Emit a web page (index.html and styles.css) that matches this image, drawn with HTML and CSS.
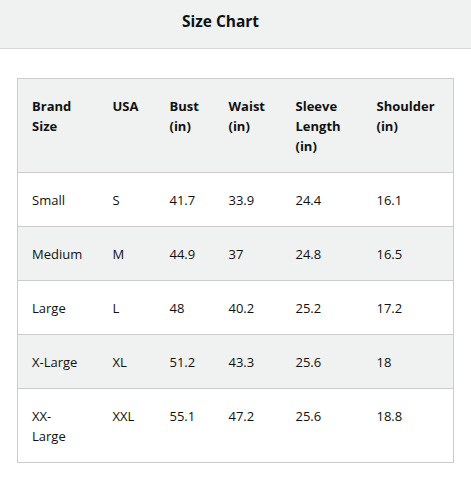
FILE: index.html
```html
<!DOCTYPE html>
<html>
<head>
<meta charset="utf-8">
<link rel="stylesheet" href="styles.css">
</head>
<body>
<header class="bar"><h1 class="title">Size Chart</h1></header>
<main class="content">
<table class="chart">
<colgroup>
<col class="c1"><col class="c2"><col class="c3"><col class="c4"><col class="c5"><col class="c6">
</colgroup>
<thead>
<tr class="shade"><th>Brand Size</th><th>USA</th><th>Bust (in)</th><th>Waist (in)</th><th>Sleeve Length (in)</th><th>Shoulder (in)</th></tr>
</thead>
<tbody>
<tr><td>Small</td><td>S</td><td>41.7</td><td>33.9</td><td>24.4</td><td>16.1</td></tr>
<tr class="shade"><td>Medium</td><td>M</td><td>44.9</td><td>37</td><td>24.8</td><td>16.5</td></tr>
<tr><td>Large</td><td>L</td><td>48</td><td>40.2</td><td>25.2</td><td>17.2</td></tr>
<tr class="shade"><td>X-Large</td><td>XL</td><td>51.2</td><td>43.3</td><td>25.6</td><td>18</td></tr>
<tr><td>XX-Large</td><td>XXL</td><td>55.1</td><td>47.2</td><td>25.6</td><td>18.8</td></tr>
</tbody>
</table>
</main>
</body>
</html>
```
FILE: styles.css
```css
html, body {
  margin: 0;
  padding: 0;
  background: #fff;
  font-family: "Open Sans", "Noto Sans", sans-serif;
  color: #111;
}
.bar {
  height: 49px;
  box-sizing: border-box;
  padding-top: 10px;
  background: #f0f1f1;
  border-bottom: 1px solid #d5d9d9;
  display: flex;
  justify-content: center;
}
.title {
  margin: 0;
  font-size: 15.5px;
  line-height: 22px;
  font-weight: 700;
  color: #0f1111;
  transform: translateX(-15px);
}
.content {
  padding: 29px 0 0 17px;
}
.chart {
  border-collapse: collapse;
  width: 436px;
  table-layout: fixed;
  border: 1px solid #ccc;
  font-size: 13px;
  line-height: 20px;
}
.c1 { width: 81px; }
.c2 { width: 57px; }
.c3 { width: 59px; }
.c4 { width: 67px; }
.c5 { width: 81px; }
.c6 { width: 91px; }
th, td {
  text-align: left;
  vertical-align: top;
  padding: 17px 14px 16px 14px;
  border-top: 1px solid #ccc;
}
th {
  font-weight: 700;
  color: #0f1111;
}
td {
  font-weight: 400;
  color: #0f1111;
}
.shade {
  background: #f0f1f1;
}
```
